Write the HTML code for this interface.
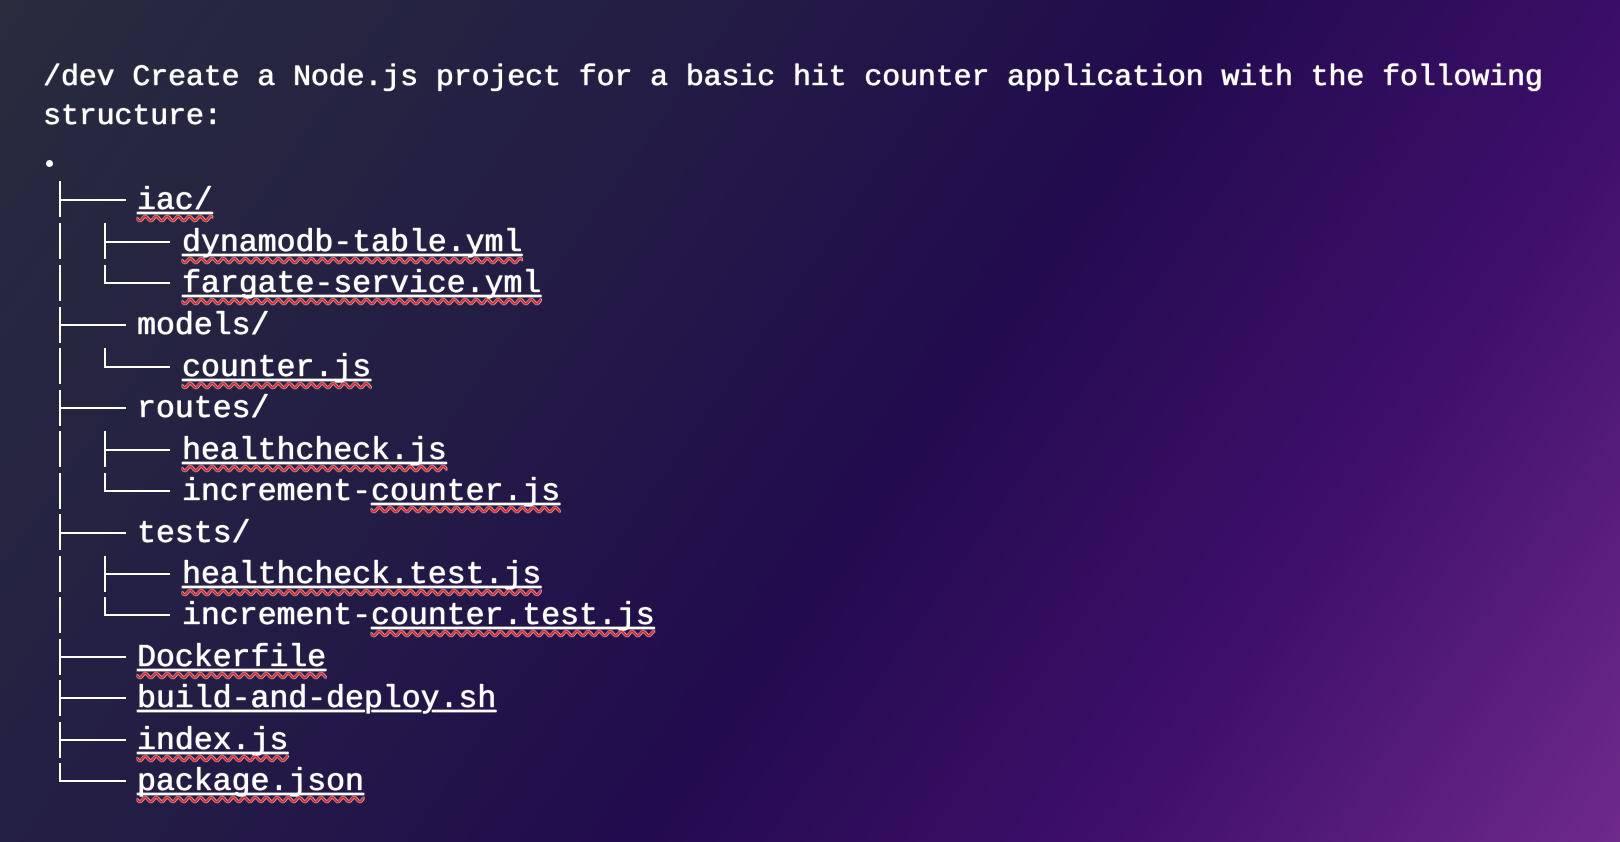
<!DOCTYPE html>
<html><head><meta charset="utf-8"><style>
html,body{margin:0;padding:0}
body{width:1620px;height:842px;overflow:hidden;position:relative;
background:linear-gradient(125deg,#282c3d 0%,#231c45 33%,#220b4e 55%,#3f0f6c 77%,#6f2a8a 100%);
font-family:"Liberation Mono",monospace;color:#fff;font-size:30px;}
.t{position:absolute;line-height:30px;white-space:pre;text-shadow:0 0 0.8px #fff,0 0 0.8px #fff,0.4px 0 0 #fff;letter-spacing:-0.15px}
.n{font-size:31.5px;letter-spacing:0}
.u{text-decoration:underline solid #fff 1.5px;text-underline-offset:3px}
.w{text-decoration:underline wavy #e0282a 1.5px;text-underline-offset:6px;text-decoration-skip-ink:none}
.v{position:absolute;background:#fff;width:2px}
.h{position:absolute;background:#fff;height:2px}
.dot{position:absolute;left:46px;top:160px;width:7px;height:7px;border-radius:50%;background:#fff}
</style></head><body>
<div class="t" style="left:43px;top:63px">/dev Create a Node.js project for a basic hit counter application with the following</div>
<div class="t" style="left:43px;top:102px">structure:</div>
<div class="dot"></div>

<div class="v" style="left:59px;top:181px;height:36px"></div><div class="h" style="left:59px;top:199px;width:67px"></div>
<div class="t n" style="left:137px;top:187px"><span class="u"><span class="w">iac/</span></span></div>
<div class="v" style="left:59px;top:223px;height:36px"></div>
<div class="v" style="left:104px;top:223px;height:36px"></div><div class="h" style="left:104px;top:241px;width:66px"></div>
<div class="t n" style="left:182px;top:229px"><span class="u"><span class="w">dynamodb-table.yml</span></span></div>
<div class="v" style="left:59px;top:265px;height:36px"></div>
<div class="v" style="left:104px;top:265px;height:19px"></div><div class="h" style="left:104px;top:282px;width:66px"></div>
<div class="t n" style="left:182px;top:270px"><span class="u"><span class="w">fargate-service.yml</span></span></div>

<div class="v" style="left:59px;top:307px;height:36px"></div><div class="h" style="left:59px;top:324px;width:67px"></div>
<div class="t n" style="left:137px;top:312px">models/</div>
<div class="v" style="left:59px;top:348px;height:36px"></div>
<div class="v" style="left:104px;top:348px;height:19px"></div><div class="h" style="left:104px;top:366px;width:66px"></div>
<div class="t n" style="left:182px;top:354px"><span class="u"><span class="w">counter.js</span></span></div>

<div class="v" style="left:59px;top:390px;height:36px"></div><div class="h" style="left:59px;top:407px;width:67px"></div>
<div class="t n" style="left:137px;top:395px">routes/</div>
<div class="v" style="left:59px;top:431px;height:36px"></div>
<div class="v" style="left:104px;top:431px;height:36px"></div><div class="h" style="left:104px;top:449px;width:66px"></div>
<div class="t n" style="left:182px;top:437px"><span class="u"><span class="w">healthcheck.js</span></span></div>
<div class="v" style="left:59px;top:473px;height:36px"></div>
<div class="v" style="left:104px;top:473px;height:19px"></div><div class="h" style="left:104px;top:490px;width:66px"></div>
<div class="t n" style="left:182px;top:478px">increment-<span class="u"><span class="w">counter.js</span></span></div>

<div class="v" style="left:59px;top:514px;height:36px"></div><div class="h" style="left:59px;top:532px;width:67px"></div>
<div class="t n" style="left:137px;top:520px">tests/</div>
<div class="v" style="left:59px;top:556px;height:36px"></div>
<div class="v" style="left:104px;top:556px;height:36px"></div><div class="h" style="left:104px;top:573px;width:66px"></div>
<div class="t n" style="left:182px;top:561px"><span class="u"><span class="w">healthcheck.test.js</span></span></div>
<div class="v" style="left:59px;top:597px;height:36px"></div>
<div class="v" style="left:104px;top:597px;height:19px"></div><div class="h" style="left:104px;top:614px;width:66px"></div>
<div class="t n" style="left:182px;top:602px">increment-<span class="u"><span class="w">counter.test.js</span></span></div>

<div class="v" style="left:59px;top:639px;height:36px"></div><div class="h" style="left:59px;top:656px;width:67px"></div>
<div class="t n" style="left:137px;top:644px"><span class="u"><span class="w">Dockerfile</span></span></div>
<div class="v" style="left:59px;top:680px;height:36px"></div><div class="h" style="left:59px;top:697px;width:67px"></div>
<div class="t n" style="left:137px;top:685px"><span class="u">build-and-deploy.sh</span></div>
<div class="v" style="left:59px;top:722px;height:36px"></div><div class="h" style="left:59px;top:739px;width:67px"></div>
<div class="t n" style="left:137px;top:727px"><span class="u"><span class="w">index.js</span></span></div>
<div class="v" style="left:59px;top:763px;height:19px"></div><div class="h" style="left:59px;top:780px;width:67px"></div>
<div class="t n" style="left:137px;top:768px"><span class="u"><span class="w">package.json</span></span></div>
</body></html>
